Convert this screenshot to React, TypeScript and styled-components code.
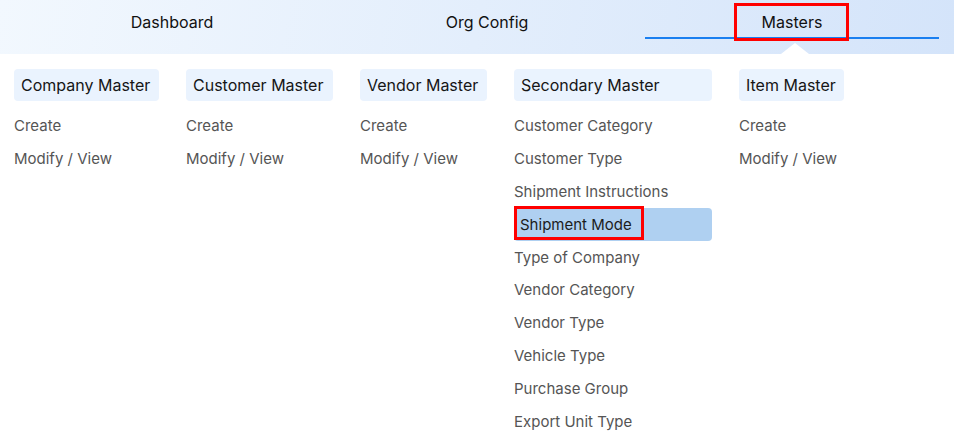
import React from 'react';
import styled, { createGlobalStyle } from 'styled-components';

const GlobalStyle = createGlobalStyle`
  body {
    margin: 0;
    background: #ffffff;
    font-family: Inter, "Noto Sans", sans-serif;
  }
`;

const Page = styled.div`
  width: 954px;
  height: 440px;
  overflow: hidden;
  background: #fff;
`;

const TabBar = styled.div`
  height: 54px;
  display: flex;
  padding-left: 25px;
  background: linear-gradient(100deg, #f2f8fe 0%, #e3eefc 50%, #d4e4fa 100%);
`;

const Tab = styled.div<{ $active?: boolean; $ml?: number }>`
  position: relative;
  width: 294px;
  margin-left: ${(p) => p.$ml ?? 0}px;
  display: flex;
  align-items: center;
  justify-content: center;
  height: 39px;
  padding-top: 6px;
  box-sizing: border-box;
  font-size: 16px;
  color: #111;
  border-bottom: 2px solid ${(p) => (p.$active ? '#1a7ff0' : 'transparent')};
`;

const TabMark = styled.span`
  position: absolute;
  left: 89px;
  top: 3px;
  width: 115px;
  height: 38px;
  box-sizing: border-box;
  border: 3px solid #ff0000;
  pointer-events: none;
`;

const Pointer = styled.div`
  position: absolute;
  left: 136px;
  bottom: -17px;
  width: 0;
  height: 0;
  border-left: 14px solid transparent;
  border-right: 14px solid transparent;
  border-bottom: 11px solid #fff;
`;

const Menu = styled.div`
  display: flex;
  gap: 27px;
  padding: 15px 14px 0;
`;

const Column = styled.div<{ $w: number }>`
  width: ${(p) => p.$w}px;
  display: flex;
  flex-direction: column;
`;

const GroupTitle = styled.div`
  height: 32px;
  display: flex;
  align-items: center;
  padding: 0 7px;
  background: #eaf3fe;
  border-radius: 4px;
  font-size: 16px;
  color: #161616;
  margin-bottom: 8px;
  white-space: nowrap;
`;

const Item = styled.div<{ $selected?: boolean }>`
  position: relative;
  height: 32.9px;
  flex-shrink: 0;
  display: flex;
  align-items: center;
  font-size: 15px;
  white-space: nowrap;
  color: ${(p) => (p.$selected ? '#1c1c1c' : '#555')};
  background: ${(p) => (p.$selected ? '#afd0f1' : 'transparent')};
  padding-left: ${(p) => (p.$selected ? '6px' : '0')};
  border-radius: 4px;
`;

const ItemMark = styled.span`
  position: absolute;
  left: 0;
  top: -2px;
  width: 130px;
  height: 34px;
  box-sizing: border-box;
  border: 3px solid #ff0000;
`;

const groups = [
  { title: 'Company Master', width: 145, items: ['Create', 'Modify / View'] },
  { title: 'Customer Master', width: 147, items: ['Create', 'Modify / View'] },
  { title: 'Vendor Master', width: 127, items: ['Create', 'Modify / View'] },
  {
    title: 'Secondary Master',
    width: 198,
    items: [
      'Customer Category',
      'Customer Type',
      'Shipment Instructions',
      'Shipment Mode',
      'Type of Company',
      'Vendor Category',
      'Vendor Type',
      'Vehicle Type',
      'Purchase Group',
      'Export Unit Type',
    ],
  },
  { title: 'Item Master', width: 105, items: ['Create', 'Modify / View'] },
];

export default function App() {
  return (
    <Page>
      <GlobalStyle />
      <TabBar>
        <Tab>Dashboard</Tab>
        <Tab $ml={21}>Org Config</Tab>
        <Tab $ml={11} $active>
          Masters
          <TabMark />
          <Pointer />
        </Tab>
      </TabBar>
      <Menu>
        {groups.map((g) => (
          <Column key={g.title} $w={g.width}>
            <GroupTitle>{g.title}</GroupTitle>
            {g.items.map((it) => (
              <Item key={it} $selected={it === 'Shipment Mode'}>
                {it}
                {it === 'Shipment Mode' && <ItemMark />}
              </Item>
            ))}
          </Column>
        ))}
      </Menu>
    </Page>
  );
}
